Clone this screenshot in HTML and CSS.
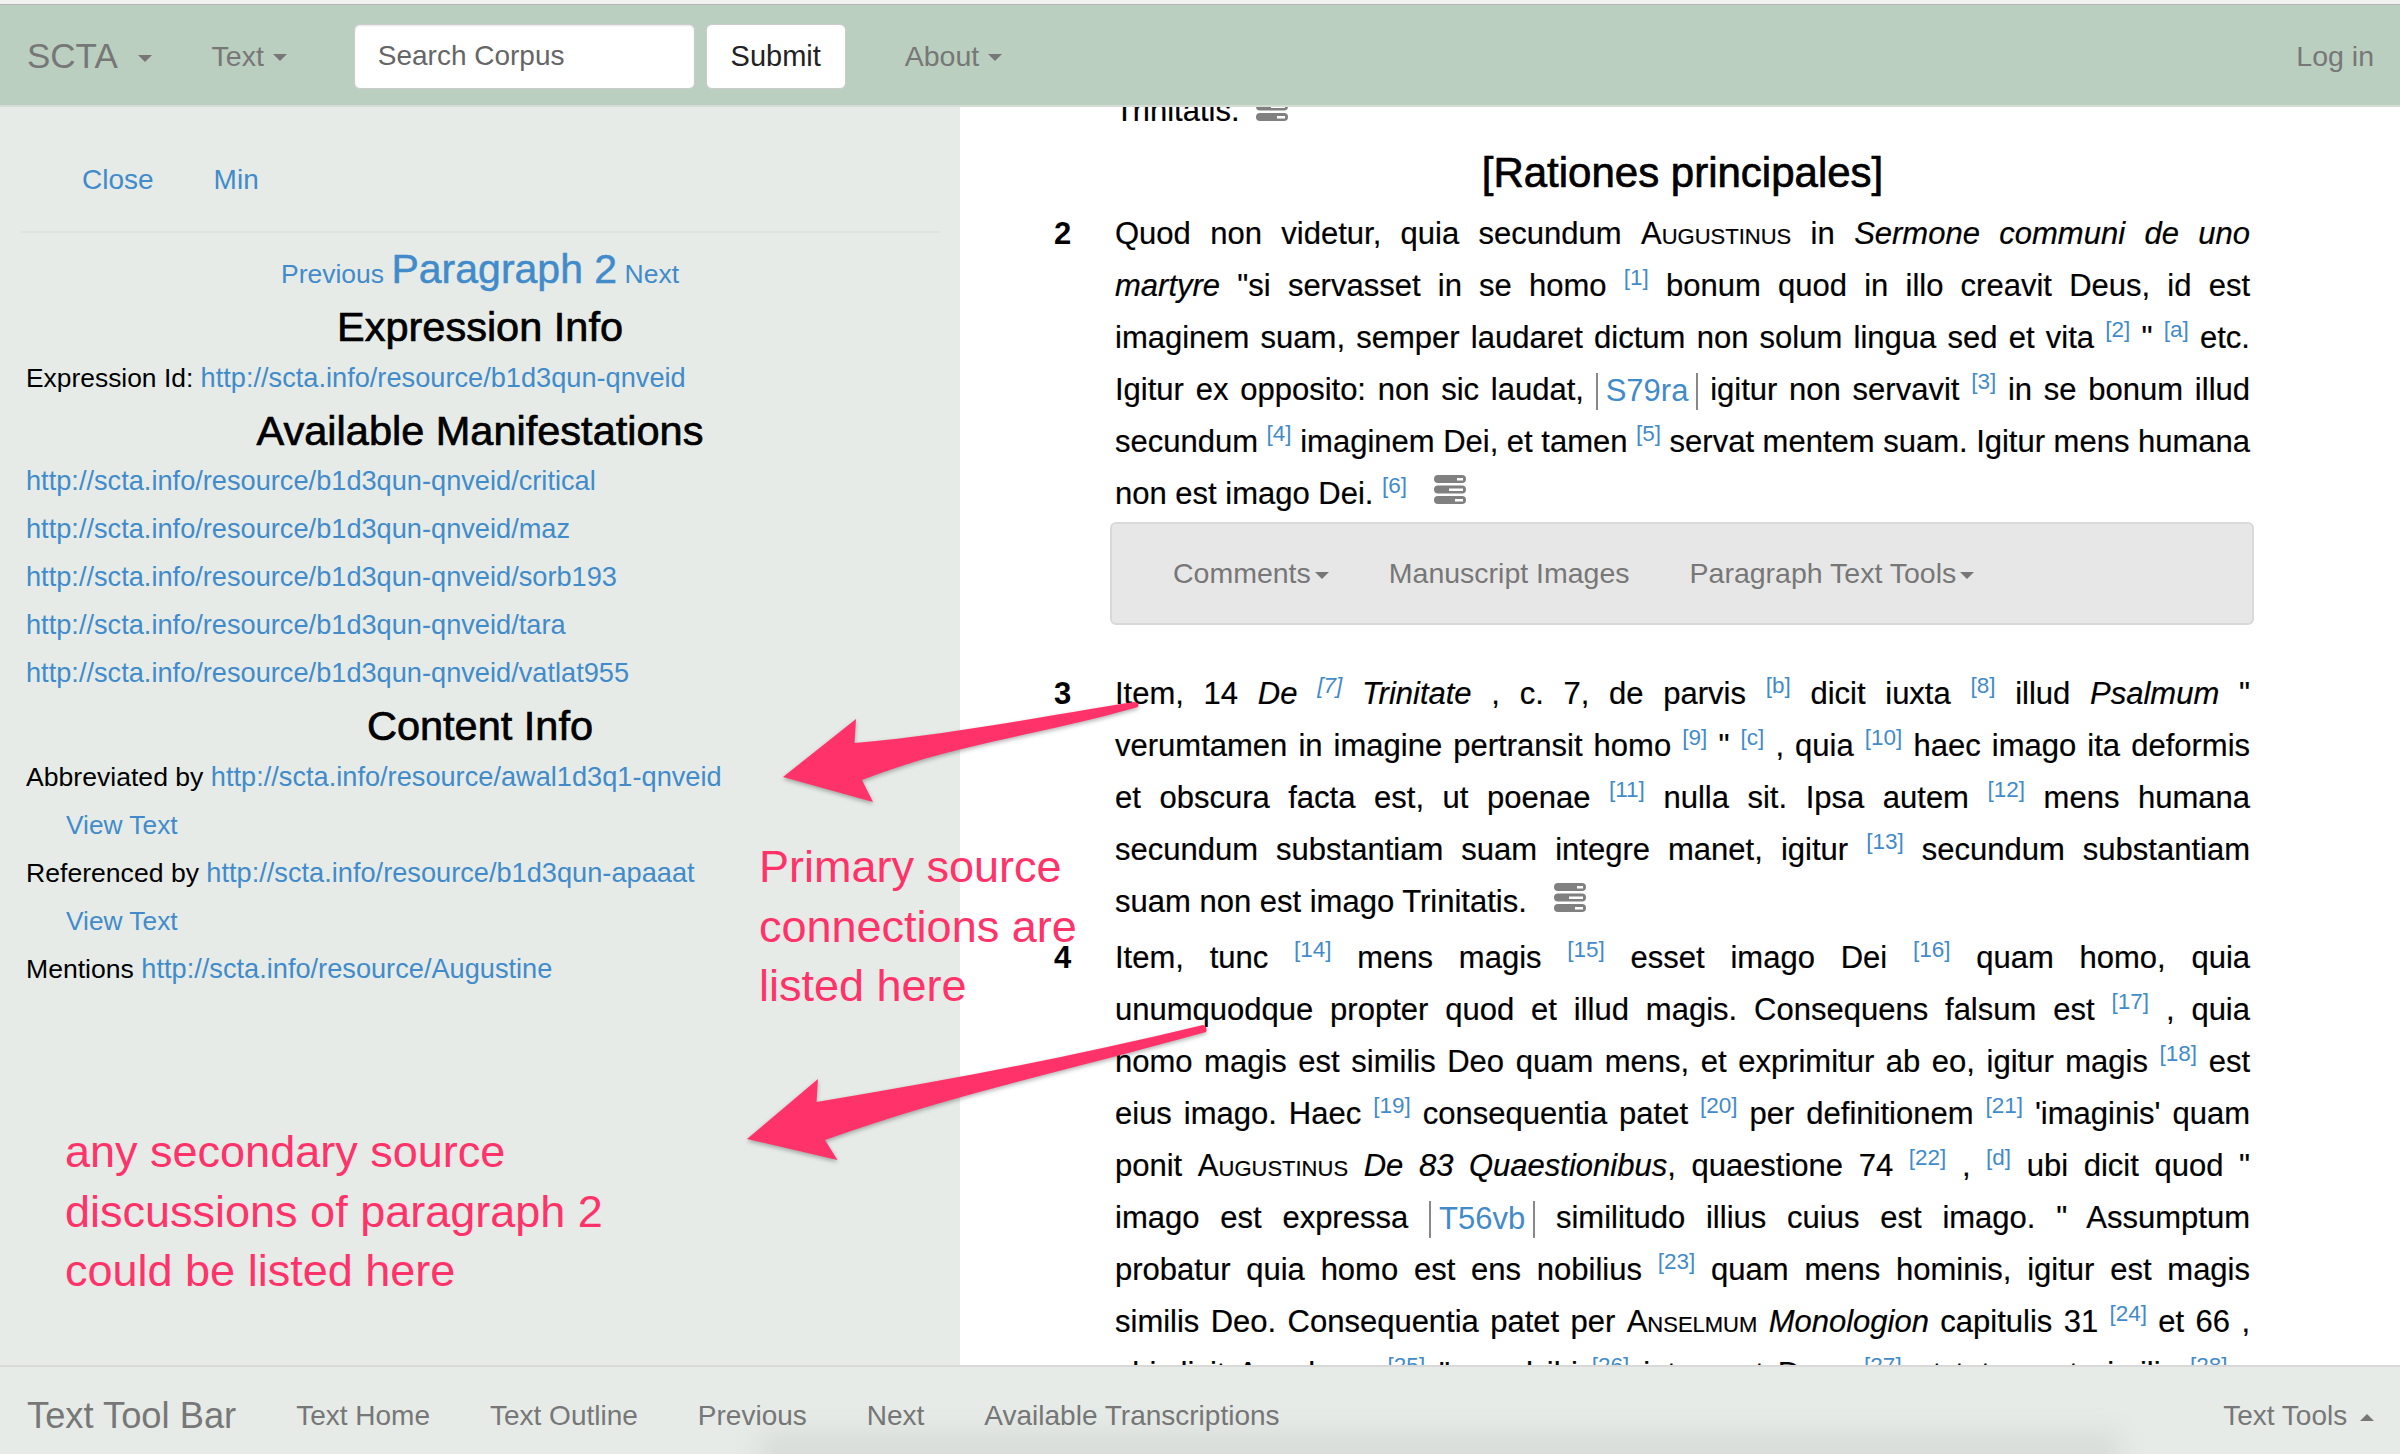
FILE: index.html
```html
<!DOCTYPE html>
<html lang="en">
<head>
  <meta charset="UTF-8" />
  <title>SCTA</title>
  <link rel="stylesheet" href="styles.css">
</head>
<body>
  <svg class="sprite" width="0" height="0">
    <symbol id="tasks" viewBox="0 0 32 29">
      <rect x="0" y="0" width="32" height="8" rx="4" fill="#808080"/>
      <rect x="23" y="3" width="6" height="2.5" fill="#fff"/>
      <rect x="0" y="10.5" width="32" height="8" rx="4" fill="#808080"/>
      <rect x="15" y="13.5" width="14" height="2.5" fill="#fff"/>
      <rect x="0" y="21" width="32" height="8" rx="4" fill="#808080"/>
      <rect x="21" y="24" width="8" height="2.5" fill="#fff"/>
    </symbol>
  </svg>

  <div class="window-edge"></div>

  <nav class="topbar">
    <a class="brand">SCTA <span class="caret brand-caret"></span></a>
    <a class="nav-link text-menu">Text <span class="caret"></span></a>
    <form class="search">
      <input class="search-input" type="text" placeholder="Search Corpus">
      <button class="search-btn" type="button">Submit</button>
    </form>
    <a class="nav-link about-menu">About <span class="caret"></span></a>
    <a class="nav-link login">Log in</a>
  </nav>

  <div class="main">
    <aside class="sidebar">
      <div class="side-tools">
        <a>Close</a>
        <a>Min</a>
      </div>
      <hr class="side-rule">
      <div class="para-nav">
        <a class="small">Previous</a> <a class="current">Paragraph 2</a> <a class="small">Next</a>
      </div>
      <h3 class="side-title first">Expression Info</h3>
      <p class="side-row narrow">Expression Id: <a>http://scta.info/resource/b1d3qun-qnveid</a></p>
      <h3 class="side-title">Available Manifestations</h3>
      <p class="side-row"><a>http://scta.info/resource/b1d3qun-qnveid/critical</a></p>
      <p class="side-row"><a>http://scta.info/resource/b1d3qun-qnveid/maz</a></p>
      <p class="side-row"><a>http://scta.info/resource/b1d3qun-qnveid/sorb193</a></p>
      <p class="side-row"><a>http://scta.info/resource/b1d3qun-qnveid/tara</a></p>
      <p class="side-row"><a>http://scta.info/resource/b1d3qun-qnveid/vatlat955</a></p>
      <h3 class="side-title">Content Info</h3>
      <p class="side-row">Abbreviated by <a>http://scta.info/resource/awal1d3q1-qnveid</a></p>
      <p class="side-row indent"><a>View Text</a></p>
      <p class="side-row">Referenced by <a>http://scta.info/resource/b1d3qun-apaaat</a></p>
      <p class="side-row indent"><a>View Text</a></p>
      <p class="side-row">Mentions <a>http://scta.info/resource/Augustine</a></p>
    </aside>

    <section class="reader">
      <div class="reader-scroll">
        <div class="para-body prev-end">
          <div class="ln last">Trinitatis. <svg class="tasks-icon near"><use href="#tasks"/></svg></div>
        </div>

        <h3 class="section-title">[Rationes principales]</h3>

        <div class="para">
          <div class="para-num">2</div>
          <div class="para-body">
            <div class="ln">Quod non videtur, quia secundum <span class="sc">Augustinus</span> in <i>Sermone communi de uno</i></div>
            <div class="ln"><i>martyre</i> "si servasset in se homo <sup>[1]</sup> bonum quod in illo creavit Deus, id est</div>
            <div class="ln">imaginem suam, semper laudaret dictum non solum lingua sed et vita <sup>[2]</sup> " <sup>[a]</sup> etc.</div>
            <div class="ln">Igitur ex opposito: non sic laudat, <a class="folio">S79ra</a> igitur non servavit <sup>[3]</sup> in se bonum illud</div>
            <div class="ln tight">secundum <sup>[4]</sup> imaginem Dei, et tamen <sup>[5]</sup> servat mentem suam. Igitur mens humana</div>
            <div class="ln last">non est imago Dei. <sup>[6]</sup> <svg class="tasks-icon"><use href="#tasks"/></svg></div>
            <div class="para-tools">
              <a>Comments<span class="caret tiny"></span></a>
              <a>Manuscript Images</a>
              <a>Paragraph Text Tools<span class="caret tiny"></span></a>
            </div>
          </div>
        </div>

        <div class="para">
          <div class="para-num">3</div>
          <div class="para-body">
            <div class="ln">Item, 14 <i>De</i> <sup><i>[7]</i></sup> <i>Trinitate</i> , c. 7, de parvis <sup>[b]</sup> dicit iuxta <sup>[8]</sup> illud <i>Psalmum</i> "</div>
            <div class="ln">verumtamen in imagine pertransit homo <sup>[9]</sup> " <sup>[c]</sup> , quia <sup>[10]</sup> haec imago ita deformis</div>
            <div class="ln">et obscura facta est, ut poenae <sup>[11]</sup> nulla sit. Ipsa autem <sup>[12]</sup> mens humana</div>
            <div class="ln">secundum substantiam suam integre manet, igitur <sup>[13]</sup> secundum substantiam</div>
            <div class="ln last">suam non est imago Trinitatis. <svg class="tasks-icon"><use href="#tasks"/></svg></div>
          </div>
        </div>

        <div class="para next">
          <div class="para-num">4</div>
          <div class="para-body">
            <div class="ln">Item, tunc <sup>[14]</sup> mens magis <sup>[15]</sup> esset imago Dei <sup>[16]</sup> quam homo, quia</div>
            <div class="ln">unumquodque propter quod et illud magis. Consequens falsum est <sup>[17]</sup> , quia</div>
            <div class="ln">homo magis est similis Deo quam mens, et exprimitur ab eo, igitur magis <sup>[18]</sup> est</div>
            <div class="ln">eius imago. Haec <sup>[19]</sup> consequentia patet <sup>[20]</sup> per definitionem <sup>[21]</sup> 'imaginis' quam</div>
            <div class="ln">ponit <span class="sc">Augustinus</span> <i>De 83 Quaestionibus</i>, quaestione 74 <sup>[22]</sup> , <sup>[d]</sup> ubi dicit quod "</div>
            <div class="ln">imago est expressa <a class="folio">T56vb</a> similitudo illius cuius est imago. " Assumptum</div>
            <div class="ln">probatur quia homo est ens nobilius <sup>[23]</sup> quam mens hominis, igitur est magis</div>
            <div class="ln">similis Deo. Consequentia patet per <span class="sc">Anselmum</span> <i>Monologion</i> capitulis 31 <sup>[24]</sup> et 66 ,</div>
            <div class="ln">ubi dicit Anselmus <sup>[25]</sup> " quod ibi <sup>[26]</sup> intus est Deus <sup>[27]</sup> et totus est similis <sup>[28]</sup> ,</div>
          </div>
        </div>
      </div>
    </section>
  </div>

  <footer class="toolbar">
    <a class="toolbar-brand">Text Tool Bar</a>
    <a>Text Home</a>
    <a>Text Outline</a>
    <a>Previous</a>
    <a>Next</a>
    <a>Available Transcriptions</a>
    <a class="toolbar-right">Text Tools <span class="caret up"></span></a>
  </footer>

  <div class="note note-primary">Primary source<br>connections are<br>listed here</div>
  <div class="note note-secondary">any secondary source<br>discussions of paragraph 2<br>could be listed here</div>

  <svg class="arrows" viewBox="0 0 2400 1454">
    <path d="M783 777 L856 719 L854.5 743 C950 735 1050 715 1134 702 Q1140 703 1138 707 C1040 735 950 745 862 780 L873 802 Z"/>
    <path d="M747 1139 L818 1079 L816.5 1102 C950 1080 1080 1055 1203 1025 Q1208 1027 1206 1032 C1070 1070 950 1095 825 1140 L837.5 1160 Z"/>
  </svg>
</body>
</html>
```

FILE: styles.css
```css
* {
  box-sizing: border-box;
}

html, body {
  margin: 0;
  height: 1454px;
  overflow: hidden;
}

body {
  position: relative;
  display: flex;
  flex-direction: column;
  font-family: "Liberation Sans", Arial, sans-serif;
  font-size: 26.6px;
  color: #000;
  background: #fff;
}

a {
  color: #428bca;
  text-decoration: none;
}

.sprite {
  position: absolute;
}

.window-edge {
  height: 5px;
  background: #f1f1f1;
  border-bottom: 1px solid #b5b5b5;
}

/* top navbar */
.topbar {
  display: flex;
  align-items: center;
  height: 102px;
  padding: 2px 26px 0 27px;
  font-size: 28.5px;
  background: #bacfbf;
  border-bottom: 2px solid #d5dcd6;
  position: relative;
  z-index: 2;
}

.topbar a {
  color: #777;
  white-space: nowrap;
}

.brand {
  font-size: 35px;
  margin-right: 60px;
}

.caret {
  display: inline-block;
  width: 0;
  height: 0;
  margin-left: 1px;
  vertical-align: middle;
  border-top: 7px solid #777;
  border-left: 7px solid transparent;
  border-right: 7px solid transparent;
}

.caret.brand-caret {
  margin-left: 12px;
}

.caret.tiny {
  margin-left: 4px;
}

.caret.up {
  margin-left: 5px;
  border-top: 0;
  border-bottom: 7px solid #777;
}

.search {
  display: flex;
  gap: 11px;
  margin-left: 67px;
  margin-right: 59px;
}

.search-input {
  width: 341px;
  height: 65px;
  padding: 0 23px;
  font: 28px "Liberation Sans", Arial, sans-serif;
  color: #555;
  background: #fff;
  border: 1px solid #ccc;
  border-radius: 6px;
  box-shadow: inset 0 1px 2px rgba(0, 0, 0, 0.1);
}

.search-input::placeholder {
  color: #666;
  opacity: 1;
}

.search-btn {
  width: 140px;
  height: 65px;
  font: 29px "Liberation Sans", Arial, sans-serif;
  color: #222;
  background: #fff;
  border: 1px solid #ccc;
  border-radius: 6px;
}

.login {
  margin-left: auto;
}

/* page body */
.main {
  display: flex;
  flex: 1;
  min-height: 0;
  overflow: hidden;
}

.sidebar {
  width: 960px;
  flex: none;
  padding: 0 21px 0 26px;
  background: #e6ebe7;
}

.sidebar a {
  font-size: 27.2px;
}

.side-tools {
  display: flex;
  gap: 60px;
  padding: 51px 0 0 56px;
  line-height: 44px;
}

.sidebar .side-tools a {
  font-size: 28px;
}

.side-rule {
  margin: 29px -2px 0 -5px;
  border: 0;
  border-top: 2px solid #dfe4e0;
}

.para-nav {
  text-align: center;
  line-height: 54px;
  margin-top: 9px;
  margin-left: -5px;
}

.sidebar .para-nav .small {
  font-size: 26.5px;
}

.sidebar .para-nav .current {
  font-size: 41px;
  -webkit-text-stroke: 0.5px #428bca;
}

.side-title {
  margin: 0 0 -2.5px -5px;
  font-size: 41.5px;
  font-weight: 400;
  line-height: 58px;
  text-align: center;
  -webkit-text-stroke: 0.7px #000;
}

.side-title.first {
  margin-top: -3px;
}

.side-row {
  margin: 0;
  line-height: 48px;
}

.narrow {
  font-size: 26.4px;
}

.indent {
  padding-left: 40px;
}

.sidebar .indent a {
  font-size: 26.3px;
}

.reader {
  flex: 1;
  min-width: 0;
  overflow: hidden;
  padding: 0 150px 0 94px;
}

.reader-scroll {
  margin-top: -22px;
  font-size: 31px;
}

.prev-end {
  margin-left: 61px;
}

.section-title {
  margin: 6.5px 0 0 61px;
  font-size: 42px;
  font-weight: 400;
  line-height: 58px;
  text-align: center;
  -webkit-text-stroke: 0.7px #000;
}

.para {
  display: flex;
  margin-top: 6.5px;
}

.para + .para {
  margin-top: 43px;
}

.para.next {
  margin-top: 4px;
}

.para-num {
  width: 61px;
  flex: none;
  font-weight: 700;
  line-height: 52px;
}

.para-body {
  flex: 1;
  min-width: 0;
}

.ln {
  height: 52px;
  line-height: 52px;
  text-align: justify;
  text-align-last: justify;
  -webkit-text-stroke: 0.2px #000;
}

.ln.last {
  text-align-last: left;
}

.ln.tight {
  word-spacing: -3px;
}

.sc {
  font-variant: small-caps;
}

sup {
  font-size: 22.5px;
  line-height: 0;
  vertical-align: 11px;
  color: #428bca;
  -webkit-text-stroke: 0;
}

.folio {
  display: inline-block;
  height: 37px;
  line-height: 36px;
  padding: 0 8px;
  vertical-align: middle;
  border-left: 2px solid #888;
  border-right: 2px solid #888;
  -webkit-text-stroke: 0;
}

.tasks-icon {
  width: 32px;
  height: 29px;
  margin-left: 18.5px;
  vertical-align: 0;
}

.tasks-icon.near {
  margin-left: 8px;
}

.para-tools {
  display: flex;
  gap: 60px;
  height: 103px;
  margin: 2px -4px 0 -5px;
  padding: 0 61px;
  align-items: center;
  font-size: 28.5px;
  background: #e7e7e7;
  border: 2px solid #d9d9d9;
  border-radius: 6px;
}

.para-tools a {
  color: #777;
}

/* bottom bar */
.toolbar {
  position: relative;
  display: flex;
  align-items: center;
  gap: 60px;
  height: 89px;
  padding: 10px 26px 0 27px;
  font-size: 28px;
  background: #e6ebe7;
  border-top: 2px solid #d9d9d9;
  overflow: hidden;
}

.toolbar::after {
  content: "";
  position: absolute;
  left: 760px;
  right: 280px;
  bottom: -24px;
  height: 46px;
  background: rgba(0, 0, 0, 0.06);
  filter: blur(14px);
}

.toolbar a {
  color: #777;
  white-space: nowrap;
}

.toolbar .toolbar-brand {
  font-size: 36.3px;
}

.toolbar .toolbar-right {
  margin-left: auto;
}

/* pink annotations */
.note {
  position: absolute;
  font-size: 45px;
  line-height: 59.5px;
  color: #ff3369;
  white-space: nowrap;
  z-index: 3;
}

.note-primary {
  left: 759px;
  top: 837px;
}

.note-secondary {
  left: 65px;
  top: 1122px;
}

.arrows {
  position: absolute;
  left: 0;
  top: 0;
  width: 2400px;
  height: 1454px;
  z-index: 3;
  pointer-events: none;
  fill: #ff3369;
  filter: drop-shadow(0 2px 2px rgba(0, 0, 0, 0.3));
}
```
